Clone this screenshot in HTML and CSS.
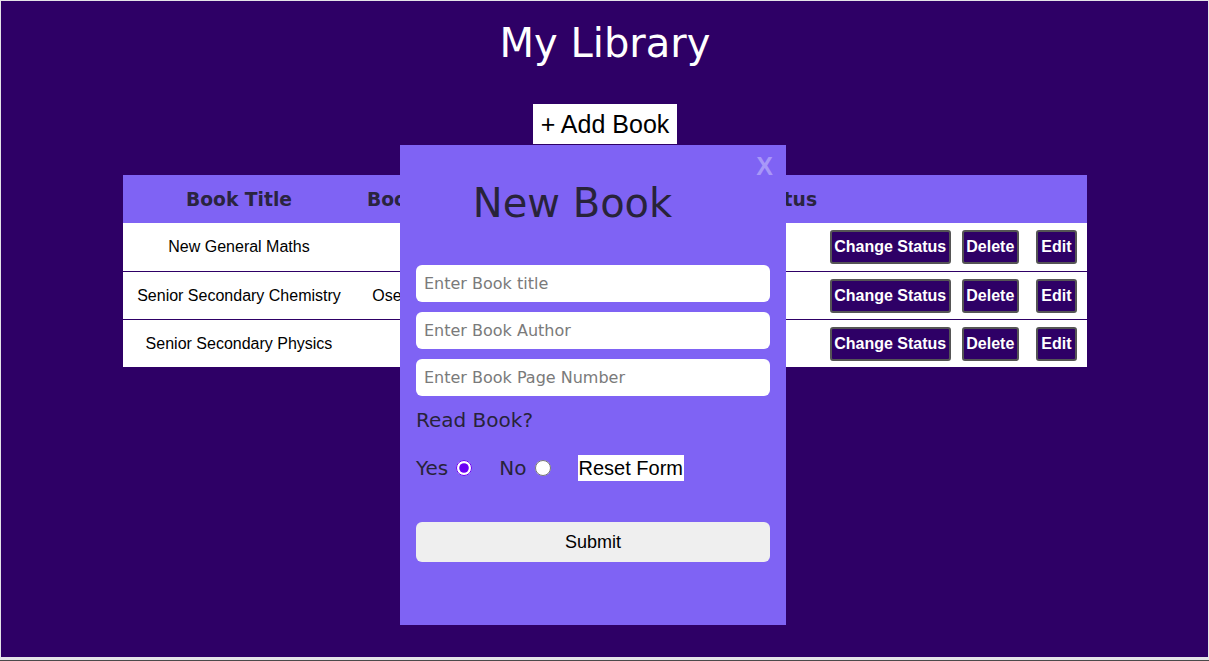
FILE: index.html
```html
<!DOCTYPE html>
<html lang="en">
<head>
<meta charset="utf-8">
<title>My Library</title>
<link rel="stylesheet" href="styles.css">
</head>
<body>
<main class="app">
  <h1 class="app-title">My Library</h1>
  <button class="add-btn" type="button">+ Add Book</button>

  <div class="table">
    <div class="thead">
      <div class="th">Book Title</div>
      <div class="th">Book Author</div>
      <div class="th">Pages</div>
      <div class="th">Read Status</div>
      <div class="th"></div>
    </div>
    <div class="tr">
      <div class="td">New General Maths</div>
      <div class="td">Macrae</div>
      <div class="td">250</div>
      <div class="td">Read</div>
      <div class="td actions">
        <button class="act" type="button">Change Status</button>
        <button class="act act-delete" type="button">Delete</button>
        <button class="act act-edit" type="button">Edit</button>
      </div>
    </div>
    <div class="tr">
      <div class="td">Senior Secondary Chemistry</div>
      <div class="td">Osei Yaw Ababio</div>
      <div class="td">420</div>
      <div class="td">Not Read</div>
      <div class="td actions">
        <button class="act" type="button">Change Status</button>
        <button class="act act-delete" type="button">Delete</button>
        <button class="act act-edit" type="button">Edit</button>
      </div>
    </div>
    <div class="tr">
      <div class="td">Senior Secondary Physics</div>
      <div class="td">Okeke</div>
      <div class="td">380</div>
      <div class="td">Read</div>
      <div class="td actions">
        <button class="act" type="button">Change Status</button>
        <button class="act act-delete" type="button">Delete</button>
        <button class="act act-edit" type="button">Edit</button>
      </div>
    </div>
  </div>

  <form class="modal">
    <button class="close-btn" type="button">X</button>
    <h2 class="modal-title">New Book</h2>
    <input class="field" type="text" placeholder="Enter Book title">
    <input class="field field-next" type="text" placeholder="Enter Book Author">
    <input class="field field-next" type="text" placeholder="Enter Book Page Number">
    <p class="question">Read Book?</p>
    <div class="choices">
      <label class="choice">Yes<input class="radio" type="radio" name="read" checked></label>
      <label class="choice">No<input class="radio" type="radio" name="read"></label>
      <button class="reset-btn" type="reset">Reset Form</button>
    </div>
    <button class="submit-btn" type="button">Submit</button>
  </form>
</main>
</body>
</html>
```
FILE: styles.css
```css
html, body {
  margin: 0;
  height: 661px;
  overflow: hidden;
}

body {
  box-sizing: border-box;
  padding: 1px 1px 0 1px;
  background: #e4e4e8;
  border-bottom: 1px solid #4a4a4a;
}

.app {
  position: relative;
  box-sizing: border-box;
  height: 656px;
  padding-left: 1px;
  background: #2e0066;
  display: flex;
  flex-direction: column;
  align-items: center;
  font-family: "DejaVu Sans", sans-serif;
}

.app-title {
  margin: 19px 0 0;
  font-size: 40px;
  line-height: 47px;
  font-weight: normal;
  color: #ffffff;
}

.add-btn {
  margin-top: 37px;
  height: 40px;
  padding: 0 8px;
  border: 0;
  background: #ffffff;
  color: #000000;
  font-family: "Liberation Sans", Arial, sans-serif;
  font-size: 25px;
}

.table {
  margin-top: 31px;
  width: 964px;
}

.thead {
  display: grid;
  grid-template-columns: 232px 155px 120px 246px 1fr;
  align-items: center;
  height: 48px;
  background: #7f63f4;
  color: #2a2440;
  font-size: 18.72px;
  font-weight: bold;
  text-align: center;
}

.tr {
  display: grid;
  grid-template-columns: 232px 155px 120px 120px 1fr;
  align-items: center;
  box-sizing: border-box;
  height: 48px;
  background: #ffffff;
  color: #000000;
  font-family: "Liberation Sans", Arial, sans-serif;
  font-size: 16px;
  text-align: center;
}

.tr + .tr {
  border-top: 1px solid #2e0066;
}

.actions {
  display: flex;
  justify-content: flex-end;
  padding-right: 10px;
}

.act {
  box-sizing: border-box;
  height: 34px;
  padding: 0 2.5px;
  border: 2px solid #555555;
  border-radius: 3px;
  background: #2e0066;
  color: #ffffff;
  font-family: "Liberation Sans", Arial, sans-serif;
  font-size: 16px;
  font-weight: bold;
}

.act-delete {
  margin-left: 11px;
}

.act-edit {
  margin-left: 17px;
  padding: 0 3.5px;
}

.modal {
  position: absolute;
  left: 399px;
  top: 144px;
  box-sizing: border-box;
  width: 386px;
  height: 480px;
  margin: 0;
  padding: 0 16px;
  background: #7f63f4;
  display: flex;
  flex-direction: column;
  color: #28233a;
}

.close-btn {
  position: absolute;
  top: 7px;
  right: 13px;
  padding: 0;
  border: 0;
  background: none;
  color: #a897f8;
  font-family: "Liberation Sans", Arial, sans-serif;
  font-size: 25px;
  font-weight: bold;
  line-height: normal;
}

.modal-title {
  margin: 35px 0 0;
  padding-right: 41px;
  font-size: 40px;
  line-height: 47px;
  font-weight: normal;
  text-align: center;
}

.field {
  box-sizing: border-box;
  height: 37px;
  margin: 38px 0 0;
  padding: 0 8px;
  border: 0;
  border-radius: 6px;
  background: #ffffff;
  font-family: "DejaVu Sans", sans-serif;
  font-size: 16px;
  color: #222222;
}

.field-next {
  margin-top: 10px;
}

.field::placeholder {
  color: #7a7a7a;
}

.question {
  margin: 12px 0 0;
  font-size: 20px;
  line-height: normal;
}

.choices {
  margin-top: 23px;
  height: 26px;
  display: flex;
  align-items: center;
  gap: 28px;
}

.choice {
  display: flex;
  align-items: center;
  font-size: 20px;
}

.radio {
  width: 16px;
  height: 16px;
  margin: 0 0 0 8px;
  accent-color: #6a00f4;
}

.radio + .radio,
.choice + .choice {
  margin-left: -1px;
}

.reset-btn {
  height: 26px;
  margin-left: -1px;
  padding: 0 1px;
  border: 0;
  background: #ffffff;
  color: #000000;
  font-family: "Liberation Sans", Arial, sans-serif;
  font-size: 20px;
}

.submit-btn {
  margin-top: 41px;
  height: 40px;
  border: 0;
  border-radius: 6px;
  background: #efefef;
  color: #000000;
  font-family: "Liberation Sans", Arial, sans-serif;
  font-size: 18px;
}
```
